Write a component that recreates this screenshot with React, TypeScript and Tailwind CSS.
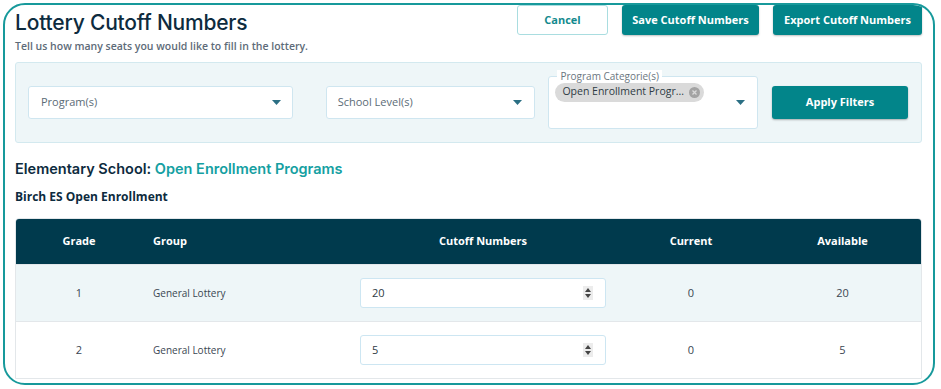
import React from 'react';

const Caret = () => (
  <svg width="9" height="5" viewBox="0 0 9 5" className="shrink-0">
    <path d="M0 0 L9 0 L4.5 5 Z" fill="#2b6f84" />
  </svg>
);

const Spinner = () => (
  <div className="w-[10px] h-[14px] bg-[#ececec] flex flex-col items-center justify-center gap-[2px]">
    <svg width="6" height="4" viewBox="0 0 6 4"><path d="M0 4 L6 4 L3 0 Z" fill="#444" /></svg>
    <svg width="6" height="4" viewBox="0 0 6 4"><path d="M0 0 L6 0 L3 4 Z" fill="#444" /></svg>
  </div>
);

const rows = [
  { grade: '1', group: 'General Lottery', cutoff: '20', current: '0', available: '20' },
  { grade: '2', group: 'General Lottery', cutoff: '5', current: '0', available: '5' },
];

const App: React.FC = () => {
  return (
    <div className="w-[941px] h-[389px] bg-white p-[3px] font-['Open_Sans',sans-serif]">
      <div className="h-[382px] w-[932px] border-2 border-[#17999b] rounded-[22px] overflow-hidden pl-[10px] pr-[11px]">
        {/* Header */}
        <div className="flex justify-between">
          <div className="pt-[4px]">
            <h1 className="text-[21px] leading-[28px] font-medium text-[#0d2b3e] font-['Inter',sans-serif] tracking-[-0.2px]">
              Lottery Cutoff Numbers
            </h1>
            <p className="text-[10.5px] leading-[14px] font-semibold text-[#5d6b78] mt-[2px]">
              Tell us how many seats you would like to fill in the lottery.
            </p>
          </div>
          <div className="flex gap-[14px]">
            <button className="w-[91px] h-[30px] rounded-[3px] border border-[#a9dde0] bg-white text-[#138a8e] text-[11px] font-bold">
              Cancel
            </button>
            <button className="w-[137px] h-[30px] rounded-[3px] bg-[#02858a] text-white text-[11px] font-bold shadow-[0_1px_2px_rgba(0,0,0,0.25)]">
              Save Cutoff Numbers
            </button>
            <button className="w-[149px] h-[30px] rounded-[3px] bg-[#02858a] text-white text-[11px] font-bold shadow-[0_1px_2px_rgba(0,0,0,0.25)]">
              Export Cutoff Numbers
            </button>
          </div>
        </div>

        {/* Filters */}
        <div className="mt-[9px] h-[81px] border border-[#d3e9ef] bg-[#eef6f8] rounded-[3px] flex items-center pl-[12px] pr-[13px]">
          <div className="w-[265px] h-[33px] bg-white border border-[#cfe6f0] rounded-[3px] flex items-center justify-between pl-[12px] pr-[11px]">
            <span className="text-[11px] text-[#5b6b76]">Program(s)</span>
            <Caret />
          </div>
          <div className="ml-[33px] w-[210px] h-[33px] bg-white border border-[#cfe6f0] rounded-[3px] flex items-center justify-between pl-[11px] pr-[12px]">
            <span className="text-[11px] text-[#5b6b76]">School Level(s)</span>
            <Caret />
          </div>
          <div className="relative ml-[13px] w-[210px] h-[53px] bg-white border border-[#cfe6f0] rounded-[3px] flex items-center justify-end pr-[12px] mb-[1px]">
            <span className="absolute -top-[7px] left-[8px] bg-white px-[3px] text-[10px] leading-[12px] text-[#6b7680]">
              Program Categorie(s)
            </span>
            <div className="absolute top-[6px] left-[6px] h-[19px] rounded-full bg-[#dadada] flex items-center pl-[7px] pr-[4px] gap-[5px]">
              <span className="text-[10.5px] text-[#2e3a44]">Open Enrollment Progr...</span>
              <svg width="11" height="11" viewBox="0 0 11 11">
                <circle cx="5.5" cy="5.5" r="5.5" fill="#a3a3a3" />
                <path d="M3.5 3.5 L7.5 7.5 M7.5 3.5 L3.5 7.5" stroke="#dadada" strokeWidth="1.3" />
              </svg>
            </div>
            <div className="mt-[1px]">
              <Caret />
            </div>
          </div>
          <button className="ml-[14px] w-[136px] h-[33px] rounded-[3px] bg-[#02858a] text-white text-[11px] font-bold shadow-[0_1px_2px_rgba(0,0,0,0.3)]">
            Apply Filters
          </button>
        </div>

        {/* Section titles */}
        <h2 className="mt-[16px] text-[14.5px] leading-[20px] font-semibold text-[#0d2b3e] font-['Inter',sans-serif]">
          Elementary School: <span className="text-[#15a0a2]">Open Enrollment Programs</span>
        </h2>
        <h3 className="mt-[10px] text-[12px] leading-[16px] font-bold text-[#0d2b3e]">
          Birch ES Open Enrollment
        </h3>

        {/* Table */}
        <div className="mt-[13px] border border-[#e3e7ea] rounded-t-[4px] overflow-hidden">
          <div className="h-[45px] bg-[#003a4d] grid grid-cols-[126px_206px_270px_146px_1fr] items-center text-white text-[11px] font-bold">
            <div className="text-center">Grade</div>
            <div className="pl-[11px]">Group</div>
            <div className="text-center">Cutoff Numbers</div>
            <div className="text-center">Current</div>
            <div className="text-center">Available</div>
          </div>
          {rows.map((r, i) => (
            <div
              key={r.grade}
              className={`h-[57px] grid grid-cols-[126px_206px_270px_146px_1fr] items-center text-[11px] text-[#3a4652] border-t border-[#e3e7ea] ${i === 0 ? 'bg-[#eef6f8]' : 'bg-white'}`}
            >
              <div className="text-center">{r.grade}</div>
              <div className="pl-[11px] text-[10px]">{r.group}</div>
              <div className="px-[12px]">
                <div className="h-[30px] bg-white border border-[#cde6f2] rounded-[3px] flex items-center justify-between pl-[11px] pr-[12px]">
                  <span className="text-[11px] text-[#2e3a44]">{r.cutoff}</span>
                  <Spinner />
                </div>
              </div>
              <div className="text-center">{r.current}</div>
              <div className="text-center">{r.available}</div>
            </div>
          ))}
        </div>
      </div>
    </div>
  );
};

export default App;
